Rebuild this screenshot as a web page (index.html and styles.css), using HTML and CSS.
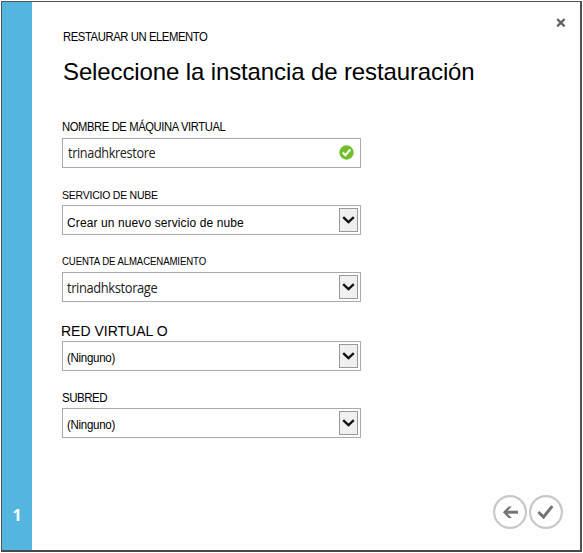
FILE: index.html
```
<!DOCTYPE html>
<html lang="es">
<head>
<meta charset="utf-8">
<title>Restaurar un elemento</title>
<link rel="stylesheet" href="styles.css">
</head>
<body>
<div class="dialog">
  <aside class="rail"><span class="step">1</span></aside>
  <main class="content">
    <header class="header">
      <div class="eyebrow"><span>RESTAURAR UN ELEMENTO</span></div>
      <button class="close" aria-label="Cerrar"><svg width="10" height="10" viewBox="0 0 10 10"><path d="M1.2 2 8.6 9.4M8.6 2 1.2 9.4"/></svg></button>
    </header>
    <h1 class="title"><span>Seleccione la instancia de restauración</span></h1>
    <form class="form">
      <div class="field">
        <label class="label label-vm"><span>NOMBRE DE MÁQUINA VIRTUAL</span></label>
        <div class="box"><span class="value value-ui">trinadhkrestore</span>
          <svg class="valid" width="15" height="15" viewBox="0 0 15 15"><circle cx="7.5" cy="7.5" r="7.2"/><path d="m3.7 7.6 2.6 2.7 5-5.8"/></svg>
        </div>
      </div>
      <div class="field">
        <label class="label label-cloud"><span>SERVICIO DE NUBE</span></label>
        <div class="box"><span class="value value-cloud">Crear un nuevo servicio de nube</span>
          <span class="drop"><svg width="13" height="9" viewBox="0 0 13 9"><path d="m1.2 1.2 5.3 5 5.3-5"/></svg></span></div>
      </div>
      <div class="field">
        <label class="label label-storage"><span>CUENTA DE ALMACENAMIENTO</span></label>
        <div class="box"><span class="value value-ui value-storage">trinadhkstorage</span>
          <span class="drop"><svg width="13" height="9" viewBox="0 0 13 9"><path d="m1.2 1.2 5.3 5 5.3-5"/></svg></span></div>
      </div>
      <div class="field field-network">
        <label class="label label-network"><span>RED VIRTUAL O</span></label>
        <div class="box"><span class="value value-none">(Ninguno)</span>
          <span class="drop"><svg width="13" height="9" viewBox="0 0 13 9"><path d="m1.2 1.2 5.3 5 5.3-5"/></svg></span></div>
      </div>
      <div class="field">
        <label class="label label-subnet"><span>SUBRED</span></label>
        <div class="box"><span class="value value-none">(Ninguno)</span>
          <span class="drop"><svg width="13" height="9" viewBox="0 0 13 9"><path d="m1.2 1.2 5.3 5 5.3-5"/></svg></span></div>
      </div>
    </form>
    <footer class="actions">
      <button class="round" aria-label="Atrás"><svg width="34" height="34" viewBox="0 0 34 34"><circle cx="17" cy="17" r="15.9"/><path d="M25 17.2H12.5"/><path d="M18.8 11.4H15.6L9.9 17.2l5.7 5.8h3.2L13.2 17.2z" class="solid"/></svg></button>
      <button class="round" aria-label="Aceptar"><svg width="34" height="34" viewBox="0 0 34 34"><circle cx="17" cy="17" r="15.9"/><path d="m9.4 17 5.1 5 8.8-10.9"/></svg></button>
    </footer>
  </main>
</div>
</body>
</html>
```
FILE: styles.css
```
* { box-sizing: border-box; }
html, body { margin: 0; }
body {
  width: 583px;
  height: 553px;
  padding: 1px;
  background: #fff;
  overflow: hidden;
  font-family: "Liberation Sans", Arial, sans-serif;
  color: #000;
}
.dialog {
  display: flex;
  width: 581px;
  height: 551px;
  border: 1px solid #555;
  border-right: 2px solid #505050;
  border-bottom: 2px solid #484848;
}
.rail {
  display: flex;
  flex-direction: column;
  justify-content: flex-end;
  align-items: center;
  width: 30px;
  padding-bottom: 25px;
  background: #52b6e1;
}
.step {
  font: 700 16px/20px "Noto Sans", "Open Sans", sans-serif;
  color: #fff;
}
.content {
  display: flex;
  flex: 1;
  flex-direction: column;
  padding: 15px 14px 21px 30px;
  background: #fefefe;
}
.header {
  display: flex;
  justify-content: space-between;
  height: 32px;
}
.eyebrow {
  padding: 12px 0 0 1px;
  font-size: 12px;
  line-height: 16px;
  letter-spacing: -0.45px;
  white-space: nowrap;
}
.eyebrow span, .label span, .value {
  display: inline-block;
  transform-origin: 0 50%;
}
.eyebrow span { transform: scaleX(0.941); }
button { padding: 0; border: 0; background: none; }
.close { width: 10px; height: 10px; line-height: 0; }
.close path { fill: none; stroke: #626262; stroke-width: 2.3; }
.title {
  margin: 9px 0 0;
  padding-left: 1px;
  font-size: 24px;
  font-weight: 400;
  line-height: 28px;
  letter-spacing: -0.12px;
  white-space: nowrap;
}
.form { width: 299px; margin-top: 32px; }
.field { height: 67px; }
.field-network { padding-top: 2px; height: 69px; }
.field-network + .field { margin-top: -2px; padding-top: 2px; }
.label {
  display: block;
  height: 20px;
  margin-left: -0.5px;
  font-size: 12px;
  line-height: 20px;
  white-space: nowrap;
}
.label-vm { line-height: 19px; letter-spacing: -0.4px; }
.label-vm span { transform: scaleX(0.933); }
.label-cloud { font-size: 11px; letter-spacing: -0.25px; }
.label-cloud span { transform: scaleX(0.955); }
.label-storage { font-size: 10px; letter-spacing: -0.1px; }
.label-storage span { transform: scaleX(0.96); }
.label-network { margin-left: -1px; font-size: 14px; }
.label-subnet { letter-spacing: -0.5px; }
.label-subnet span { transform: scaleX(0.96); }
.box {
  display: flex;
  justify-content: space-between;
  height: 30px;
  padding: 2px 2px 2px 4px;
  border: 1px solid #aaa;
  background: #fff;
}
.value {
  font-size: 12px;
  line-height: 30px;
  letter-spacing: 0.11px;
  white-space: nowrap;
}
.value-ui {
  margin-left: 1px;
  font: 14px/24px "Open Sans", sans-serif;
  letter-spacing: -0.4px;
  color: #222;
  transform: scaleX(0.905);
}
.value-storage { margin-left: 0; line-height: 26px; transform: scaleX(0.92); }
.value-none { line-height: 28px; letter-spacing: -0.3px; transform: scaleX(0.96); }
.valid { margin: 4px 4px 0 0; }
.valid circle { fill: #70bf2b; }
.valid path { fill: none; stroke: #fff; stroke-width: 2.1; }
.drop {
  display: flex;
  align-items: center;
  justify-content: center;
  width: 19px;
  height: 24px;
  border: 1px solid #999;
  background: #f0f0f0;
}
.drop path { fill: none; stroke: #111; stroke-width: 2.3; }
.actions {
  display: flex;
  justify-content: flex-end;
  gap: 2px;
  margin: auto 3px 0 0;
}
.round { width: 34px; height: 34px; line-height: 0; }
.round circle { fill: #fff; stroke: #c8c8c8; stroke-width: 2.2; }
.round path { fill: none; stroke: #747474; stroke-width: 3; }
.round .solid { fill: #747474; stroke: none; }
```
